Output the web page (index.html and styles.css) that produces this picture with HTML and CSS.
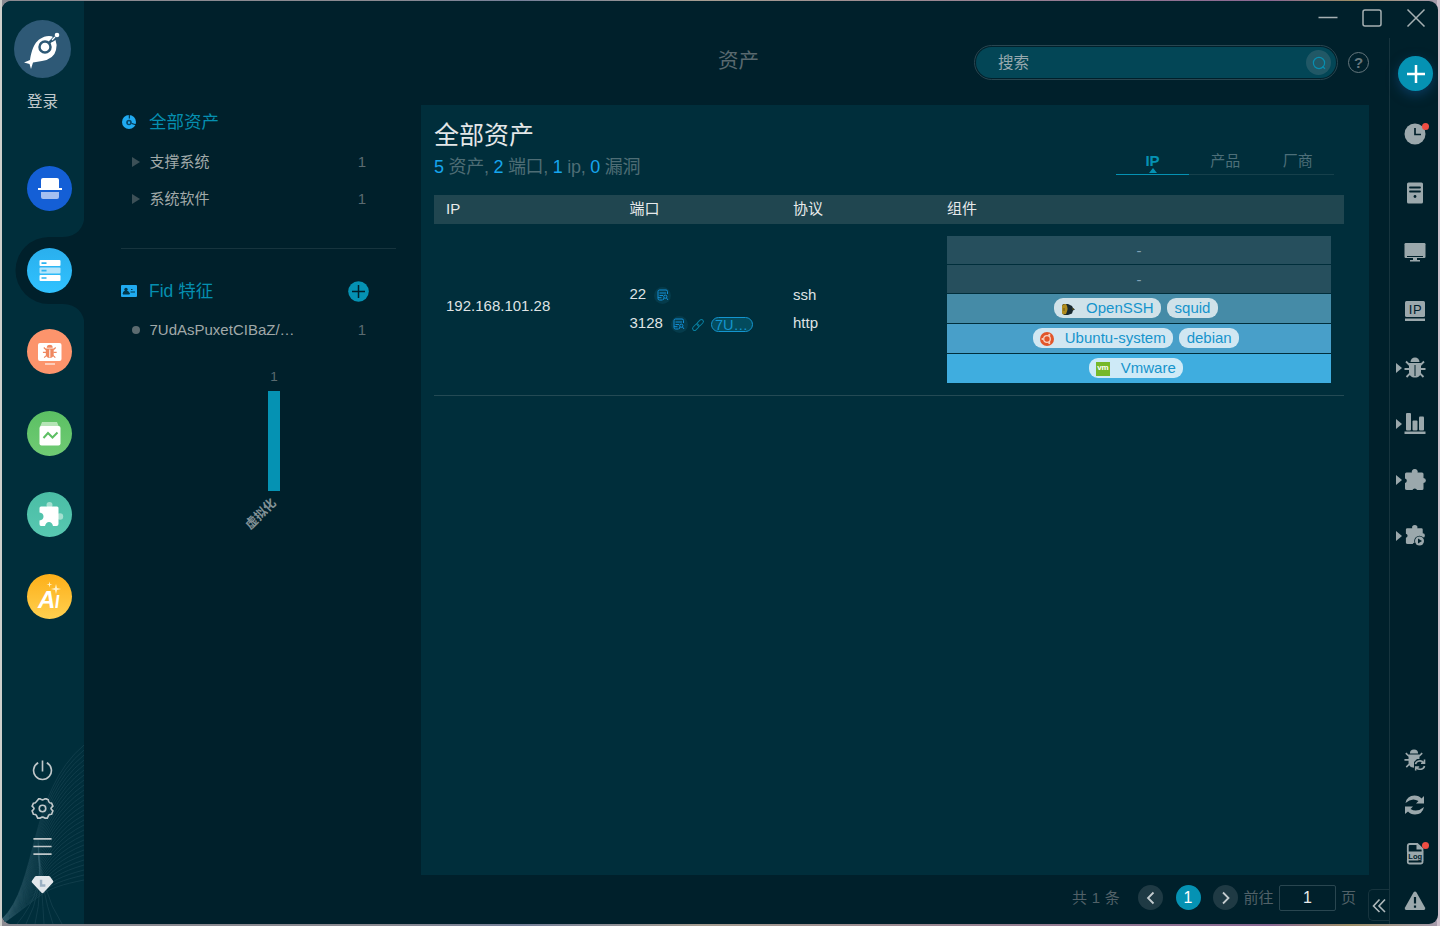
FILE: index.html
```html
<!DOCTYPE html>
<html lang="zh-CN">
<head>
<meta charset="utf-8">
<title>资产</title>
<link rel="stylesheet" href="styles.css">
</head>
<body>
<svg class="defs" width="0" height="0">
  <defs>
    <symbol id="bug" viewBox="0 0 22 22"><path d="M6.500 5a4.500 4.500 0 0 1 9 0z"/><path d="M5 6h12v8.500c0 4-2.500 6-6 6s-6-2-6-6z"/><path d="M5.500 8 2 4.500M5.500 12H.5M6.500 16 2.500 20M16.500 8 20 4.500M16.500 12h5M15.500 16l4 4" fill="none" stroke="currentColor" stroke-width="1.800"/></symbol>
    <symbol id="puzzle" viewBox="0 0 22 22"><path d="M2.500 3.500H8a3 2.500 0 1 1 5.500 0H18q1.500 0 1.500 1.500v4a2.400 2.500 0 0 1 0 5v5.500q0 1.500-1.500 1.500H13a2.300 2 0 0 0-4.500 0H3q-2 0-2-1.500V14a2.300 2.300 0 0 0 0-4.500V5q0-1.500 1.500-1.500z"/></symbol>
    <symbol id="detail" viewBox="0 0 12 12"><path d="M5.500 11H2.500Q1 11 1 9.500V2.500Q1 1 2.500 1h6.500q1.500 0 1.500 1.500V5M2.500 4h6.500M2.500 6.500H6M1 8.700h3.500" fill="none" stroke="currentColor"/><circle cx="8.300" cy="7.700" r="1.600" fill="none" stroke="currentColor"/><path d="M7 9l-1 2m3.500-2 1.500 2" fill="none" stroke="currentColor"/></symbol>
  </defs>
</svg>
<div class="window">
  <aside class="sidebar">
    <svg class="waves" id="waves" viewBox="0 0 82 184"></svg>
    <div class="logo"><svg viewBox="0 0 57 58" width="57" height="58"><path d="M10 42.500 16 40C18 29 21 17 35 16q3 0 4 1l-3 4 2.500 1 3-2q2 5 .5 10-2 9-14 11l-9 1.500-2 6.500-1.500-5z" fill="#fff"/><circle cx="31" cy="27" r="5.500" fill="#fff" stroke="#2e5976" stroke-width="2.500"/><path d="m35 23 7-7" stroke="#2e5976" stroke-width="2.500"/><path d="m38 20 3-3" stroke="#fff" stroke-width="1.300"/><circle cx="43" cy="15" r="2.300" fill="#fff"/></svg></div>
    <div class="login">登录</div>
    <nav class="nav">
      <div class="nav-item blue"><svg viewBox="0 0 45 45"><path d="M14 22v-8q0-2 2-2h14q2 0 2 2v8h3v2H11v-2z" fill="#fff"/><path d="M14 26h18v5q0 2-2 2H16q-2 0-2-2z" fill="#a5bff0"/></svg></div>
      <div class="nav-item sky">
        <svg class="notch" viewBox="0 0 70 114"><path d="M70 0Q69 23 48 24H34a33.500 33.500 0 0 0 0 67h14q21 1 22 23z"/></svg>
        <svg viewBox="0 0 45 45"><rect x="12.500" y="12" width="21" height="6" rx="1" fill="#fff"/><rect x="12.500" y="19.500" width="21" height="6" rx="1" fill="#b5e5fb"/><rect x="12.500" y="27" width="21" height="6" rx="1" fill="#fff"/><path d="M14.500 15.200h5M14.500 22.700h5M14.500 30h5" stroke="#2db4f0" stroke-width="1.700"/></svg></div>
      <div class="nav-item orange"><svg viewBox="0 0 45 45"><rect x="11" y="14" width="23.500" height="18" rx="2" fill="#fff"/><path d="M18 35h10" stroke="#ffe0d4" stroke-width="1.500"/><use href="#bug" x="15.500" y="15.500" width="14.500" height="14.500" fill="#ef875f" color="#ef875f"/><path d="M22.800 20.500v8" stroke="#fff"/></svg></div>
      <div class="nav-item green"><svg viewBox="0 0 45 45"><path d="m15 11h15l2 5H13z" fill="#b5e5b6"/><rect x="12.500" y="15" width="21" height="19.500" rx="2" fill="#fff"/><path d="m16.500 27 4.500-5 4.500 4.500 5-5" fill="none" stroke="#5dbf64" stroke-width="2"/></svg></div>
      <div class="nav-item teal"><svg viewBox="0 0 45 45"><circle cx="22.500" cy="13" r="3" fill="#a5e0d0"/><circle cx="33" cy="24.500" r="3.200" fill="#a5e0d0"/><path d="M14 14.500h16q1.500 0 1.500 1.500v16q0 2-2 2H26q-1-4-4-4t-4 4h-4q-1.500 0-1.500-2v-3.500q4-.5 4-4t-4-4V16q0-1.500 1.500-1.500z" fill="#fff"/></svg></div>
      <div class="nav-item amber"><span class="ai">A<i>ı</i></span><svg class="spark" viewBox="0 0 45 45"><path d="m29 10 1 4 4 1-4 1-1 4-1-4-4-1 4-1zM22.500 7.500l.6 2.400 2.400.6-2.400.6-.6 2.400-.6-2.400-2.400-.6 2.400-.6z" fill="#fff1c8"/></svg></div>
    </nav>
    <div class="tools">
      <svg viewBox="0 0 24 24"><path d="M12 1.500V13M7.500 4a9.300 9.300 0 1 0 9 0" /></svg>
      <svg viewBox="0 0 24 24"><path d="M8 2h1.500q2.500 2 5 0H16l2 1q.3 2.500 1.500 3l2 .5 1.300 3q-2 2-2 2.500t2 2.500L21.500 18q-2.500 0-3 1L17 22h-2.500q-2.500-2-5 0H7l-1.500-3q-.5-1-3-1l-1.300-3.500q2-2 2-2.500t-2-2.500L2.500 6.500q2.500 0 3-1.500z"/><circle cx="12" cy="12" r="3.400"/></svg>
      <svg viewBox="0 0 24 24"><path d="M2.500 4h19M2.500 12h19M2.500 20h19"/></svg>
      <svg viewBox="0 0 24 24"><path d="M5.500 3h13q1 0 1.500 1l3 4q.7 1 0 2l-10 10.500q-1 1-2 0L1 10q-.7-1 0-2l3-4q.5-1 1.500-1z" fill="#e2e7eb" stroke="none"/><path d="M10.500 7v6h4.500" stroke="#9bb0c2" stroke-width="2.500"/></svg>
    </div>
  </aside>
  <div class="body">
    <div class="titlebar">
      <svg viewBox="0 0 20 20"><path d="M.5 10.500h19"/></svg>
      <svg viewBox="0 0 20 20"><rect x="1" y="3" width="18" height="16" rx="2"/></svg>
      <svg viewBox="0 0 20 20"><path d="m1.500 2.500 17 17m0-17-17 17"/></svg>
    </div>
    <div class="work">
      <main class="main">
        <header class="header">
          <h1 class="page-title">资产</h1>
          <div class="search"><div class="search-inner"><span>搜索</span><div class="search-btn"><svg viewBox="0 0 14 14"><circle cx="7" cy="7" r="5.600"/><path d="m10.500 10.500 2.500 2.300"/></svg></div></div></div>
          <div class="help">?</div>
        </header>
        <div class="content">
          <section class="tree">
            <div class="tree-head"><svg viewBox="0 0 16 16" width="16" height="16"><circle cx="8" cy="8" r="7" fill="#20aaf0"/><path d="M8.300 0v4.500M10.500 9.500 16 11" stroke="#00202b"/><circle cx="8" cy="8.500" r="2.800" fill="#06486c"/><path d="M7 7.500h2v2.300H7z" fill="#20aaf0"/></svg><span>全部资产</span></div>
            <div class="tree-item"><i class="arrow"></i><span>支撑系统</span><b>1</b></div>
            <div class="tree-item"><i class="arrow"></i><span>系统软件</span><b>1</b></div>
            <hr class="rule">
            <div class="tree-head fid"><svg viewBox="0 0 16 16" width="16" height="16"><rect y="2" width="16" height="12" rx="1" fill="#20aaf0"/><circle cx="5" cy="6.500" r="1.700" fill="#00364a"/><path d="M2 11q0-3 3-3t3.500 3zM10 6.500h1.500M9.500 9h4.500" fill="#00364a" stroke="#00364a"/></svg><span>Fid 特征</span>
              <svg class="add" viewBox="0 0 21 21" width="21" height="21"><circle cx="10.500" cy="10.500" r="10.300" fill="#0592b3"/><path d="M10.500 4v13M4 10.500h13" stroke="#00202b" stroke-width="1.500"/></svg></div>
            <div class="tree-item fid-item"><i class="dot"></i><span>7UdAsPuxetCIBaZ/…</span><b>1</b></div>
            <div class="chart"><span class="chart-val">1</span><div class="bar" style="height:100px"></div><span class="chart-label">虚拟化</span></div>
          </section>
          <section class="panel">
            <div class="panel-head">
              <div><h2>全部资产</h2><p class="stats"><b>5</b> 资产, <b>2</b> 端口, <b>1</b> ip, <b>0</b> 漏洞</p></div>
              <div class="tabs"><div class="tab active">IP</div><div class="tab">产品</div><div class="tab">厂商</div></div>
            </div>
            <div class="row head"><span>IP</span><span>端口</span><span>协议</span><span>组件</span></div>
            <div class="row data">
              <span class="ip">192.168.101.28</span>
              <div class="ports">
                <div class="port">22<span class="badge"><svg><use href="#detail"/></svg></span></div>
                <div class="port">3128<span class="badge"><svg><use href="#detail"/></svg></span><svg class="link" viewBox="0 0 12 12"><g transform="rotate(-45 6 6)"><rect x="-.8" y="4" width="7.500" height="4" rx="2"/><rect x="5.300" y="4" width="7.500" height="4" rx="2"/></g></svg><span class="fid-tag">7U…</span></div>
              </div>
              <div class="protos"><div>ssh</div><div>http</div></div>
              <div class="stack">
                <div class="layer l1">-</div>
                <div class="layer l1">-</div>
                <div class="layer l3"><span class="chip"><svg viewBox="0 0 14 14"><path d="M2 2h5l4 2 1 2 2 1.500-2 1-1 3-4 1.500H3L1 11V4z" fill="#1a2a30"/><path d="M2 2.500 5 2q3 4 0 10l-3 .5L1 11V4z" fill="#b08c1e"/><path d="M3 6v3M12 6v2" stroke="#6d5a14"/></svg>OpenSSH</span><span class="chip">squid</span></div>
                <div class="layer l4"><span class="chip"><svg viewBox="0 0 14 14"><circle cx="7" cy="7" r="7" fill="#e2562a"/><circle cx="7" cy="7" r="3.300" fill="none" stroke="#f7d3c4" stroke-width="1.300"/><g fill="#f7d3c4"><circle cx="2.500" cy="7" r="1.100"/><circle cx="9.300" cy="2.900" r="1.100"/><circle cx="9.300" cy="11.100" r="1.100"/></g></svg>Ubuntu-system</span><span class="chip">debian</span></div>
                <div class="layer l5"><span class="chip"><i class="vm">vm</i>Vmware</span></div>
              </div>
            </div>
          </section>
        </div>
        <footer class="footer">
          <span class="total">共 1 条</span>
          <span class="pg"><svg viewBox="0 0 12 14"><path d="M8.500 1.500 3 7l5.500 5.500"/></svg></span>
          <span class="pg current">1</span>
          <span class="pg"><svg viewBox="0 0 12 14"><path d="M3 1.500 8.500 7 3 12.500"/></svg></span>
          <span class="goto">前往</span><span class="page-input">1</span><span class="unit">页</span>
          <span class="collapse"><svg viewBox="0 0 14 16" width="14" height="16"><path d="M7.500 2.500 1.500 9l6 6M13 2.500 7 9l6 6"/></svg></span>
        </footer>
      </main>
      <aside class="rail">
        <div class="plus"><svg viewBox="0 0 20 20" width="20" height="20"><path d="M10 1v18M1 10h18"/></svg></div>
        <div class="group g1">
          <div class="slot"><svg viewBox="0 0 22 22"><circle cx="11" cy="11" r="10.500"/><path d="M11 5v6.500h6" fill="none" stroke="#00202b" stroke-width="1.700"/></svg><em></em></div>
          <div class="slot"><svg viewBox="0 0 22 22"><rect x="3" y=".5" width="16" height="21" rx="1.500"/><path d="M6 5.500h10M6 9.500h10" stroke="#00202b" stroke-width="1.800" stroke-linecap="round"/><circle cx="11" cy="14.500" r="1.400" fill="#00202b"/></svg></div>
          <div class="slot"><svg viewBox="0 0 22 22"><rect x=".5" y="2" width="21" height="15" rx="1.200"/><path d="M3 15.500h16" stroke="#00202b"/><path d="M9 17h4v2h3v1.500H6V19h3z"/></svg></div>
          <div class="slot"><svg viewBox="0 0 22 22"><rect x="1" y="1" width="20" height="16" rx="1.500"/><path d="M1 18.500h20v2.500H1z"/><text x="11.500" y="14" class="ip-text">IP</text></svg></div>
        </div>
        <div class="group g2">
          <div class="slot sub"><svg viewBox="0 0 22 22"><use href="#bug"/><path d="M11 8v11" stroke="#00202b"/></svg></div>
          <div class="slot sub"><svg viewBox="0 0 22 22"><rect x="2" y="0" width="5" height="17.500" rx="1"/><rect x="8.500" y="7.500" width="5" height="10" rx="1"/><rect x="15" y="3.500" width="5" height="14" rx="1"/><path d="M.5 18.500h21V21H.5z"/></svg></div>
          <div class="slot sub"><svg viewBox="0 0 22 22"><use href="#puzzle"/></svg></div>
          <div class="slot sub"><svg viewBox="0 0 22 22"><use href="#puzzle" width="20" height="20" x="1"/><circle cx="15.500" cy="16" r="5.300" fill="#00202b"/><circle cx="15.500" cy="16" r="4.500"/><path d="m14 13.500 4 2.500-4 2.500z" fill="#00202b"/></svg></div>
        </div>
        <div class="group g3">
          <div class="slot"><svg viewBox="0 0 22 22"><use href="#bug" width="20" height="20"/><path d="M10 21v-8l3-3h9v11z" fill="#00202b"/><path d="M11.500 15.200a4.500 4 0 0 1 8-1.700m1 3.500a4.500 4 0 0 1-8 1.700M20.500 10.500v3.700H17M11.700 21.500V18h3.500" fill="none" stroke="currentColor" stroke-width="1.600"/></svg></div>
          <div class="slot up"><svg viewBox="0 0 22 22"><path d="M1.500 9Q3 1.500 10.500 1.500q4.500 0 7 3L20 2v7.500h-8l2.500-2.500Q8 3 1.500 9zM20 13q-1.500 7.500-9 7.500-4.500 0-7-3L1 20v-7.500h8L6.500 15q6.500 4 13.500-2z"/></svg></div>
          <div class="slot"><svg viewBox="0 0 22 22"><path d="M3.800 9V3q0-2 2-2h7.500L18.500 6v3M3.800 17v2q0 1.500 2 1.500h10.700q2 0 2-1.500v-2" fill="none" stroke="currentColor" stroke-width="1.800"/><path d="M12.500 1v5.500h6z"/><rect x="3" y="8.500" width="16.500" height="9"/><text x="11.200" y="15.500" class="log-text">Log</text></svg><em></em></div>
          <div class="slot"><svg viewBox="0 0 22 22"><path d="M9.500 2.500q1.500-2 3 0l8.500 15q.8 2.500-1.500 2.500h-17Q.2 20 1 17.500z"/><path d="M11 7v6.500M11 15.500v2.200" stroke="#00202b" stroke-width="2.200"/></svg></div>
        </div>
      </aside>
    </div>
  </div>
</div>
<script src="waves.js"></script>
</body>
</html>
```
FILE: styles.css
```css
* { box-sizing: border-box; }
body { margin: 0; width: 1440px; height: 926px; overflow: hidden; padding: 1px 2px 2px; font-family: "Liberation Sans", "Noto Sans CJK SC", sans-serif; font-size: 15px; color: #dfe3e4;
  background: linear-gradient(90deg, #cfcfcb 0 2px, transparent 2px 1437px, #cdbfcb 1437px), linear-gradient(90deg, #8b8a91 0 380px, #75809a 520px, #a69d91 700px, #8a6893 1270px, #9c8d66 1350px, #a49aac); }
.defs { position: absolute; }
svg { display: block; }
h1, h2, p { margin: 0; font-weight: 400; }
.window { width: 1436px; height: 923px; border-radius: 9px; overflow: hidden; display: flex; background: #00202b; }
.sidebar { position: relative; width: 82px; background: #002e3b; display: flex; flex-direction: column; height: 923px; }
.waves { position: absolute; left: 0; bottom: 0; width: 82px; height: 184px; }
.waves path { fill: none; stroke: #55828d; stroke-width: .7; opacity: .27; }
.logo { width: 57px; height: 58px; margin: 19px 0 0 12px; border-radius: 50%; background: #2e5976; }
.login { margin: 13px 0 0 25px; line-height: 22px; font-size: 15.500px; color: #c0c9cc; }
.nav { display: flex; flex-direction: column; gap: 36.400px; margin: 53px 0 0 25px; }
.nav-item { position: relative; width: 45px; height: 45px; border-radius: 50%; }
.nav-item svg { position: relative; width: 45px; height: 45px; }
.nav-item .notch { position: absolute; left: -12px; top: -35px; width: 70px; height: 114px; fill: #00202b; }
.blue { background: #145fd6; }
.sky::before { content: ""; position: absolute; inset: 0; border-radius: 50%; background: linear-gradient(#2aafed, #30c2ff); z-index: 1; }
.sky svg:last-child { z-index: 2; }
.orange { background: #fc946c; }
.green { background: linear-gradient(#5bc063, #70cb74); }
.teal { background: linear-gradient(#4abda5, #58c8b1); }
.amber { background: linear-gradient(#fdaf18, #ffd050); }
.sky, .orange, .green, .teal, .amber { top: .6px; }
.ai { position: absolute; left: 11px; top: 12px; font: italic bold 24px/28px "Liberation Sans", sans-serif; color: #fff; }
.ai i { display: inline-block; font-size: 23px; transform: scaleX(.75); transform-origin: left; }
.nav-item .spark { position: absolute; left: 0; top: 0; }
.tools { position: relative; margin: auto 0 28px 29px; display: flex; flex-direction: column; gap: 15px; }
.tools svg { width: 23px; height: 23px; fill: none; stroke: #c0c8ca; stroke-width: 1.700; }
.body { flex: 1; display: flex; flex-direction: column; }
.titlebar { height: 37px; display: flex; justify-content: flex-end; gap: 24px; padding: 6px 12px 0 0; }
.titlebar svg { width: 20px; height: 20px; fill: none; stroke: #a6b0b3; stroke-width: 1.500; }
.work { flex: 1; display: flex; }
.main { width: 1305px; display: flex; flex-direction: column; }
.header { height: 67px; padding: 7px 20px 0 634px; display: flex; }
.page-title { font-size: 20.500px; line-height: 32px; color: #59696f; }
.search { width: 364px; height: 35px; margin-left: auto; border: 1px solid #294650; border-radius: 18px; padding: 1px; }
.search-inner { height: 31px; border-radius: 16px; background: #034656; display: flex; align-items: center; padding: 0 5px 0 22px; color: #97a9ae; font-size: 15.500px; }
.search-inner span { margin-top: -3px; }
.search-btn { margin-left: auto; width: 25px; height: 25px; border-radius: 50%; background: #215866; display: grid; place-items: center; }
.search-btn svg { width: 14px; height: 14px; fill: none; stroke: #088eb0; stroke-width: 1.200; }
.help { width: 21px; height: 21px; border: 1.500px solid #66777d; border-radius: 50%; margin: 7px 0 0 10px; text-align: center; line-height: 19px; font-size: 15px; font-weight: bold; color: #66777d; }
.content { height: 770px; display: flex; }
.tree { width: 337px; padding: 4px 25px 0 37px; }
.tree-head { display: flex; align-items: center; height: 26px; font-size: 17.500px; color: #058fb0; }
.tree-head span { margin: -4px 0 0 12px; }
.tree-item { display: flex; align-items: center; height: 37px; color: #a0a9a9; font-size: 15px; }
.tree-item span { margin-top: -2px; }
.tree-head + .tree-item { margin-top: 8px; }
.tree-item b { margin-left: auto; margin-right: 30px; font-weight: 400; color: #5a6a70; }
.arrow { margin-left: 11px; border: solid transparent; border-width: 5.500px 0 5.500px 8px; border-left-color: #3c5057; width: 8px; margin-right: 9.500px; }
.rule { border: 0; height: 1px; background: #17343e; margin: 31px 0 0; }
.fid { margin-top: 29px; }
.add { margin-left: auto; margin-right: 27px; }
.tree-head + .fid-item { margin-top: 7px; }
.fid-item span { margin: 0 0 0 -.5px; }
.dot { width: 8px; height: 8px; border-radius: 50%; background: #5c6b70; margin: 0 10px 0 11px; }
.chart { display: flex; flex-direction: column; align-items: center; width: 50px; margin: 20px 0 0 128px; color: #5a6a70; font-size: 13.500px; }
.chart-val { line-height: 18px; }
.bar { width: 12.500px; background: #0592b3; margin-top: 5px; }
.chart-label { font-size: 12.500px; font-weight: bold; line-height: 16px; transform: rotate(-45deg); margin: 15px 26px 0 0; color: #829196; white-space: nowrap; }
.panel { width: 948px; background: #002e3b; padding: 11px 25px 0 13px; }
.panel-head { display: flex; justify-content: space-between; height: 79px; }
.panel h2 { font-size: 25px; line-height: 38px; color: #e4e7e8; }
.stats { font-size: 18px; line-height: 26px; color: #4e6d75; white-space: nowrap; letter-spacing: -.27px; }
.stats b { color: #16a5ed; font-weight: 400; }
.tabs { display: flex; height: 59px; margin-right: 10px; align-items: flex-end; }
.tab { position: relative; height: 28px; width: 72.500px; text-align: center; line-height: 27px; color: #4d6f79; border-bottom: 1px solid #16404b; }
.tab.active { width: 73px; color: #0592b3; font-weight: bold; border-color: #0592b3; }
.tab.active::after { content: ""; position: absolute; left: 32.500px; bottom: 1px; border: 4px solid transparent; border-top: 0; border-bottom: 5px solid #0592b3; }
.row { display: grid; grid-template-columns: 183.500px 163.500px 154px 384px; padding-left: 12px; }
.head { height: 29px; background: #204650; line-height: 27px; color: #e7eaeb; }
.data { height: 172px; padding-top: 12px; border-bottom: 1px solid #244a54; align-items: start; }
.ip { margin-top: 60px; line-height: 20px; }
.ports { margin-top: 43px; }
.port { display: flex; height: 29px; align-items: center; }
.badge { width: 17px; height: 17px; border-radius: 50%; background: #053b4b; display: grid; place-items: center; margin: 3px 0 0 8px; color: #128ed6; }
.badge svg { width: 12px; height: 12px; }
.link { width: 12px; height: 12px; margin: 4px 0 0 4px; fill: none; stroke: #087f9f; overflow: visible; }
.fid-tag { width: 42px; height: 15px; margin: 4px 0 0 7px; border: 1px solid #1495cf; border-radius: 8px; background: #034b5d; color: #1495cf; font-size: 14.500px; line-height: 14px; padding-left: 3px; white-space: nowrap; }
.protos { margin-top: 45px; line-height: 28px; }
.stack { display: flex; flex-direction: column; gap: 1px; }
.layer { height: 29px; display: flex; justify-content: center; align-items: center; }
.l1 { height: 28px; background: #264f5d; color: #80a3b7; }
.l3 { background: #458ba7; }
.l4 { background: #489fc9; }
.l5 { background: #3faddf; }
.chip { height: 20px; margin: -1px 6px 0 0; padding: 0 7.500px; border-radius: 9px; background: rgba(255,255,255,.75); color: #1694cc; display: flex; align-items: center; line-height: 19px; padding-bottom: 1px; }
.chip svg, .vm { width: 14px; height: 14px; margin: 3px 11px 0 -.5px; }
.vm { background: #76b82a; color: #fff; font: bold 8px/12px "Liberation Sans", sans-serif; text-align: center; letter-spacing: -.3px; }
.footer { height: 49px; display: flex; align-items: flex-start; padding: 10px 0 0 988px; line-height: 26px; color: #516168; }
.total { width: 66px; word-spacing: .5px; }
.pg { width: 25px; height: 25px; border-radius: 50%; background: #1f3a44; display: grid; place-items: center; margin-right: 12.500px; }
.pg svg { width: 12px; height: 14px; fill: none; stroke: #c4cccf; stroke-width: 1.800; }
.pg.current { background: #0592b3; color: #fff; font-size: 16px; }
.goto { margin-left: -7px; width: 35.500px; }
.page-input { width: 57px; height: 26px; border: 1px solid #294650; border-radius: 2px; text-align: center; color: #e8ebec; font-size: 16px; line-height: 24px; }
.unit { margin-left: 5px; width: 16px; }
.collapse { margin: 4px 0 0 auto; width: 21px; height: 32px; border: 1px solid #17343e; border-right: 0; border-radius: 5px 0 0 5px; display: grid; place-items: center; }
.collapse svg { fill: none; stroke: #aeb8bb; stroke-width: 1.600; }
.rail { width: 49px; border-left: 1px solid #17343e; display: flex; flex-direction: column; padding-top: 18px; }
.plus { width: 35px; height: 35px; border-radius: 50%; margin-left: 8px; background: #0592b3; display: grid; place-items: center; box-shadow: 0 4px 12px rgba(20,85,145,.5); }
.plus svg { stroke: #fff; stroke-width: 2.500; }
.group { color: #9ba8ac; margin-left: 14px; }
.slot { position: relative; width: 22px; display: flex; align-items: center; }
.slot > svg { width: 22px; height: 22px; fill: currentColor; }
.g1 { margin-top: 13.500px; }
.g1 .slot { height: 59px; }
.g2 .slot { height: 55.800px; }
.g3 { margin-top: auto; }
.g3 .slot { height: 47px; }
.g3 .slot.up { padding-bottom: 3px; }
.slot em { position: absolute; width: 7px; height: 7px; border-radius: 50%; background: #ef4d43; right: -3px; top: 18px; }
.g3 .slot em { top: 12px; }
.sub::before { content: ""; position: absolute; left: -8px; border: 5px solid transparent; border-left: 6px solid #9ba8ac; border-right: 0; }
.ip-text { font: 13px "Liberation Sans", sans-serif; fill: #00202b; text-anchor: middle; letter-spacing: .5px; }
.log-text { font: bold 7.500px "Liberation Sans", sans-serif; fill: #00202b; text-anchor: middle; }
```
FILE: waves.js
```js
// Fans of fine curves in the lower corner of the sidebar.
const waves = document.getElementById("waves");
function addCurve(d) {
  const p = document.createElementNS("http://www.w3.org/2000/svg", "path");
  p.setAttribute("d", d);
  waves.appendChild(p);
}
for (let i = 0; i < 28; i++) {
  addCurve(`M0 ${179 + i * 0.2} C${36 + i * 0.3} ${145 + i * 0.3} ${26 + i * 0.4} ${52 + i * 3.6} 82 ${5 + i * 5}`);
}
for (let i = 0; i < 6; i++) {
  addCurve(`M36 ${100 + i * 3} Q${38 + i} 150 ${60 - i * 9} 184`);
}
```
